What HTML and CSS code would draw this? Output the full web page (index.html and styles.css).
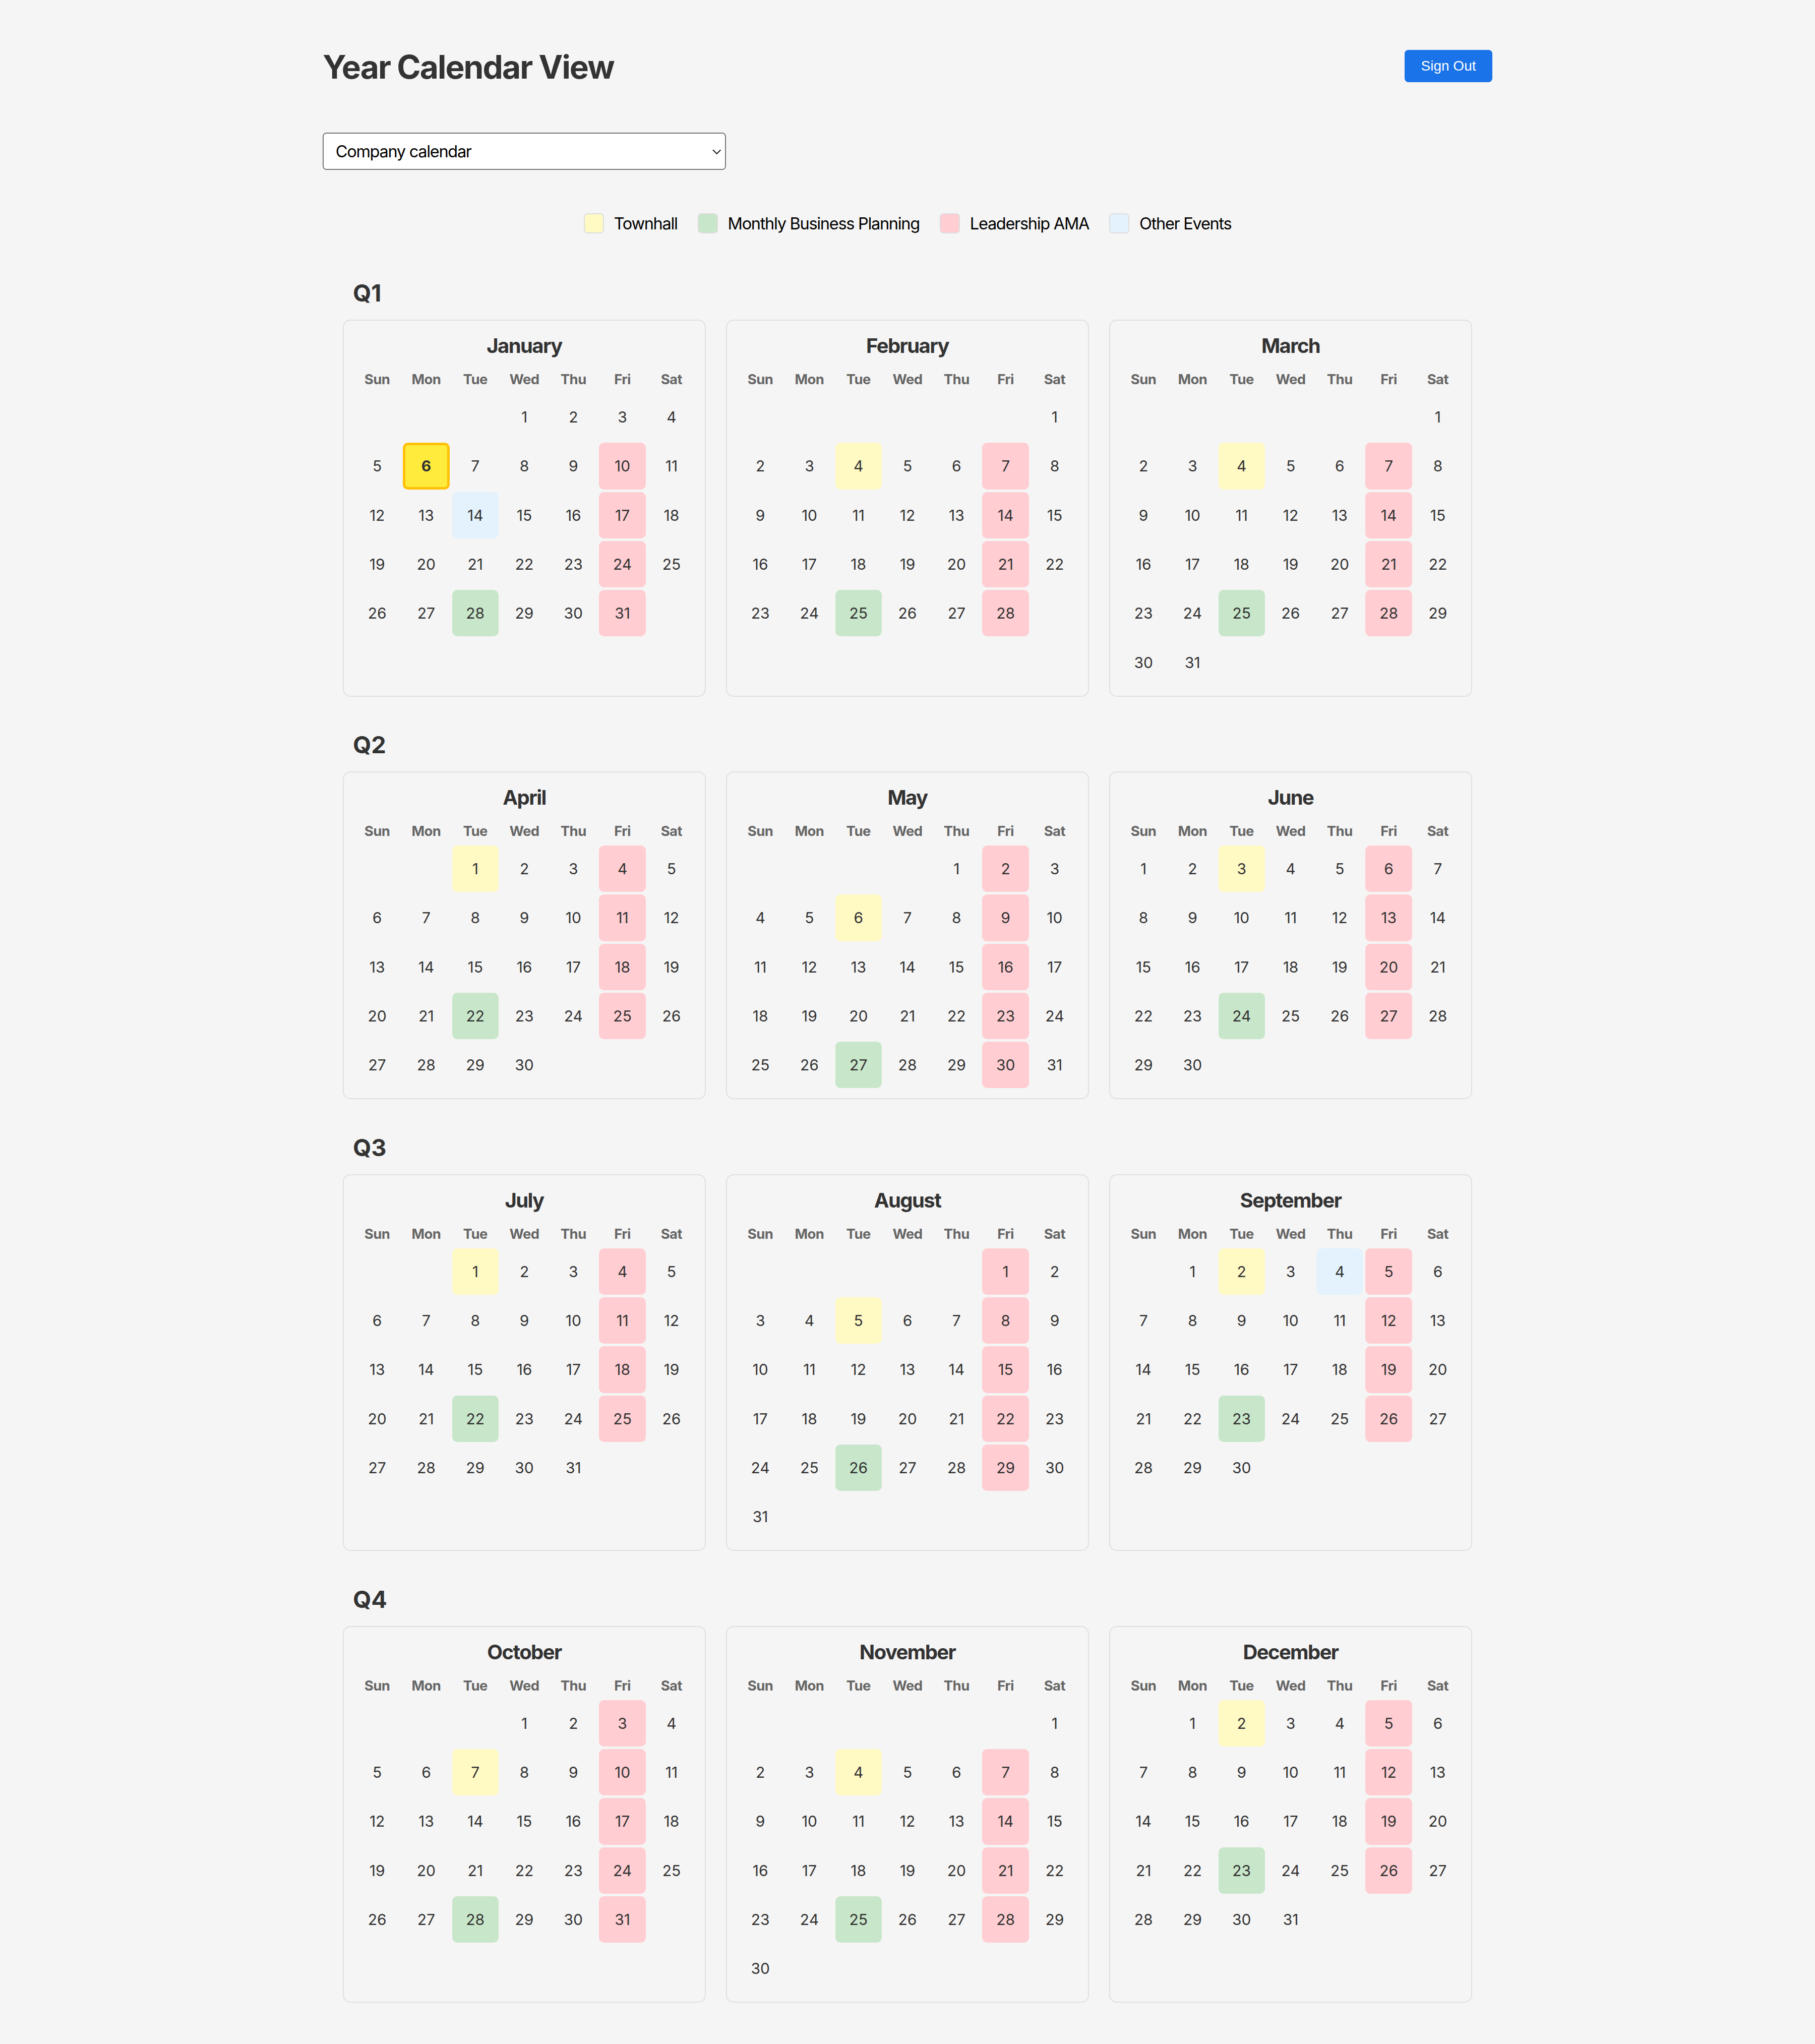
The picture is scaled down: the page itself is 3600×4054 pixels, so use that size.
FILE: index.html
```html
<!DOCTYPE html>
<html lang="en">
<head>
<meta charset="utf-8">
<title>Year Calendar View</title>
<link rel="stylesheet" href="styles.css">
</head>
<body>
<div class="page">
  <header class="header">
    <h1>Year Calendar View</h1>
    <button class="signout" type="button">Sign Out</button>
  </header>

  <div class="picker">
    <select>
      <option>Company calendar</option>
    </select>
    <svg class="chevron" viewBox="0 0 8 5" width="7" height="5" aria-hidden="true"><path d="M0.5 0.7 L4 4.2 L7.5 0.7" fill="none" stroke="#111" stroke-width="0.9"/></svg>
  </div>

  <div class="legend">
    <div class="legend-item"><span class="swatch t"></span>Townhall</div>
    <div class="legend-item"><span class="swatch m"></span>Monthly Business Planning</div>
    <div class="legend-item"><span class="swatch l"></span>Leadership AMA</div>
    <div class="legend-item"><span class="swatch o"></span>Other Events</div>
  </div>

  <section class="quarter">
    <h3>Q1</h3>
    <div class="months">
      <div class="month">
        <h4>January</h4>
        <div class="weekdays"><span>Sun</span><span>Mon</span><span>Tue</span><span>Wed</span><span>Thu</span><span>Fri</span><span>Sat</span></div>
        <div class="days">
          <span class="c4">1</span><span>2</span><span>3</span><span>4</span>
          <span>5</span><span class="today">6</span><span>7</span><span>8</span><span>9</span><span class="l">10</span><span>11</span>
          <span>12</span><span>13</span><span class="o">14</span><span>15</span><span>16</span><span class="l">17</span><span>18</span>
          <span>19</span><span>20</span><span>21</span><span>22</span><span>23</span><span class="l">24</span><span>25</span>
          <span>26</span><span>27</span><span class="m">28</span><span>29</span><span>30</span><span class="l">31</span>
        </div>
      </div>
      <div class="month">
        <h4>February</h4>
        <div class="weekdays"><span>Sun</span><span>Mon</span><span>Tue</span><span>Wed</span><span>Thu</span><span>Fri</span><span>Sat</span></div>
        <div class="days">
          <span class="c7">1</span>
          <span>2</span><span>3</span><span class="t">4</span><span>5</span><span>6</span><span class="l">7</span><span>8</span>
          <span>9</span><span>10</span><span>11</span><span>12</span><span>13</span><span class="l">14</span><span>15</span>
          <span>16</span><span>17</span><span>18</span><span>19</span><span>20</span><span class="l">21</span><span>22</span>
          <span>23</span><span>24</span><span class="m">25</span><span>26</span><span>27</span><span class="l">28</span>
        </div>
      </div>
      <div class="month">
        <h4>March</h4>
        <div class="weekdays"><span>Sun</span><span>Mon</span><span>Tue</span><span>Wed</span><span>Thu</span><span>Fri</span><span>Sat</span></div>
        <div class="days">
          <span class="c7">1</span>
          <span>2</span><span>3</span><span class="t">4</span><span>5</span><span>6</span><span class="l">7</span><span>8</span>
          <span>9</span><span>10</span><span>11</span><span>12</span><span>13</span><span class="l">14</span><span>15</span>
          <span>16</span><span>17</span><span>18</span><span>19</span><span>20</span><span class="l">21</span><span>22</span>
          <span>23</span><span>24</span><span class="m">25</span><span>26</span><span>27</span><span class="l">28</span><span>29</span>
          <span>30</span><span>31</span>
        </div>
      </div>
    </div>
  </section>

  <section class="quarter">
    <h3>Q2</h3>
    <div class="months">
      <div class="month">
        <h4>April</h4>
        <div class="weekdays"><span>Sun</span><span>Mon</span><span>Tue</span><span>Wed</span><span>Thu</span><span>Fri</span><span>Sat</span></div>
        <div class="days">
          <span class="c3 t">1</span><span>2</span><span>3</span><span class="l">4</span><span>5</span>
          <span>6</span><span>7</span><span>8</span><span>9</span><span>10</span><span class="l">11</span><span>12</span>
          <span>13</span><span>14</span><span>15</span><span>16</span><span>17</span><span class="l">18</span><span>19</span>
          <span>20</span><span>21</span><span class="m">22</span><span>23</span><span>24</span><span class="l">25</span><span>26</span>
          <span>27</span><span>28</span><span>29</span><span>30</span>
        </div>
      </div>
      <div class="month">
        <h4>May</h4>
        <div class="weekdays"><span>Sun</span><span>Mon</span><span>Tue</span><span>Wed</span><span>Thu</span><span>Fri</span><span>Sat</span></div>
        <div class="days">
          <span class="c5">1</span><span class="l">2</span><span>3</span>
          <span>4</span><span>5</span><span class="t">6</span><span>7</span><span>8</span><span class="l">9</span><span>10</span>
          <span>11</span><span>12</span><span>13</span><span>14</span><span>15</span><span class="l">16</span><span>17</span>
          <span>18</span><span>19</span><span>20</span><span>21</span><span>22</span><span class="l">23</span><span>24</span>
          <span>25</span><span>26</span><span class="m">27</span><span>28</span><span>29</span><span class="l">30</span><span>31</span>
        </div>
      </div>
      <div class="month">
        <h4>June</h4>
        <div class="weekdays"><span>Sun</span><span>Mon</span><span>Tue</span><span>Wed</span><span>Thu</span><span>Fri</span><span>Sat</span></div>
        <div class="days">
          <span>1</span><span>2</span><span class="t">3</span><span>4</span><span>5</span><span class="l">6</span><span>7</span>
          <span>8</span><span>9</span><span>10</span><span>11</span><span>12</span><span class="l">13</span><span>14</span>
          <span>15</span><span>16</span><span>17</span><span>18</span><span>19</span><span class="l">20</span><span>21</span>
          <span>22</span><span>23</span><span class="m">24</span><span>25</span><span>26</span><span class="l">27</span><span>28</span>
          <span>29</span><span>30</span>
        </div>
      </div>
    </div>
  </section>

  <section class="quarter">
    <h3>Q3</h3>
    <div class="months">
      <div class="month">
        <h4>July</h4>
        <div class="weekdays"><span>Sun</span><span>Mon</span><span>Tue</span><span>Wed</span><span>Thu</span><span>Fri</span><span>Sat</span></div>
        <div class="days">
          <span class="c3 t">1</span><span>2</span><span>3</span><span class="l">4</span><span>5</span>
          <span>6</span><span>7</span><span>8</span><span>9</span><span>10</span><span class="l">11</span><span>12</span>
          <span>13</span><span>14</span><span>15</span><span>16</span><span>17</span><span class="l">18</span><span>19</span>
          <span>20</span><span>21</span><span class="m">22</span><span>23</span><span>24</span><span class="l">25</span><span>26</span>
          <span>27</span><span>28</span><span>29</span><span>30</span><span>31</span>
        </div>
      </div>
      <div class="month">
        <h4>August</h4>
        <div class="weekdays"><span>Sun</span><span>Mon</span><span>Tue</span><span>Wed</span><span>Thu</span><span>Fri</span><span>Sat</span></div>
        <div class="days">
          <span class="c6 l">1</span><span>2</span>
          <span>3</span><span>4</span><span class="t">5</span><span>6</span><span>7</span><span class="l">8</span><span>9</span>
          <span>10</span><span>11</span><span>12</span><span>13</span><span>14</span><span class="l">15</span><span>16</span>
          <span>17</span><span>18</span><span>19</span><span>20</span><span>21</span><span class="l">22</span><span>23</span>
          <span>24</span><span>25</span><span class="m">26</span><span>27</span><span>28</span><span class="l">29</span><span>30</span>
          <span>31</span>
        </div>
      </div>
      <div class="month">
        <h4>September</h4>
        <div class="weekdays"><span>Sun</span><span>Mon</span><span>Tue</span><span>Wed</span><span>Thu</span><span>Fri</span><span>Sat</span></div>
        <div class="days">
          <span class="c2">1</span><span class="t">2</span><span>3</span><span class="o">4</span><span class="l">5</span><span>6</span>
          <span>7</span><span>8</span><span>9</span><span>10</span><span>11</span><span class="l">12</span><span>13</span>
          <span>14</span><span>15</span><span>16</span><span>17</span><span>18</span><span class="l">19</span><span>20</span>
          <span>21</span><span>22</span><span class="m">23</span><span>24</span><span>25</span><span class="l">26</span><span>27</span>
          <span>28</span><span>29</span><span>30</span>
        </div>
      </div>
    </div>
  </section>

  <section class="quarter">
    <h3>Q4</h3>
    <div class="months">
      <div class="month">
        <h4>October</h4>
        <div class="weekdays"><span>Sun</span><span>Mon</span><span>Tue</span><span>Wed</span><span>Thu</span><span>Fri</span><span>Sat</span></div>
        <div class="days">
          <span class="c4">1</span><span>2</span><span class="l">3</span><span>4</span>
          <span>5</span><span>6</span><span class="t">7</span><span>8</span><span>9</span><span class="l">10</span><span>11</span>
          <span>12</span><span>13</span><span>14</span><span>15</span><span>16</span><span class="l">17</span><span>18</span>
          <span>19</span><span>20</span><span>21</span><span>22</span><span>23</span><span class="l">24</span><span>25</span>
          <span>26</span><span>27</span><span class="m">28</span><span>29</span><span>30</span><span class="l">31</span>
        </div>
      </div>
      <div class="month">
        <h4>November</h4>
        <div class="weekdays"><span>Sun</span><span>Mon</span><span>Tue</span><span>Wed</span><span>Thu</span><span>Fri</span><span>Sat</span></div>
        <div class="days">
          <span class="c7">1</span>
          <span>2</span><span>3</span><span class="t">4</span><span>5</span><span>6</span><span class="l">7</span><span>8</span>
          <span>9</span><span>10</span><span>11</span><span>12</span><span>13</span><span class="l">14</span><span>15</span>
          <span>16</span><span>17</span><span>18</span><span>19</span><span>20</span><span class="l">21</span><span>22</span>
          <span>23</span><span>24</span><span class="m">25</span><span>26</span><span>27</span><span class="l">28</span><span>29</span>
          <span>30</span>
        </div>
      </div>
      <div class="month">
        <h4>December</h4>
        <div class="weekdays"><span>Sun</span><span>Mon</span><span>Tue</span><span>Wed</span><span>Thu</span><span>Fri</span><span>Sat</span></div>
        <div class="days">
          <span class="c2">1</span><span class="t">2</span><span>3</span><span>4</span><span class="l">5</span><span>6</span>
          <span>7</span><span>8</span><span>9</span><span>10</span><span>11</span><span class="l">12</span><span>13</span>
          <span>14</span><span>15</span><span>16</span><span>17</span><span>18</span><span class="l">19</span><span>20</span>
          <span>21</span><span>22</span><span class="m">23</span><span>24</span><span>25</span><span class="l">26</span><span>27</span>
          <span>28</span><span>29</span><span>30</span><span>31</span>
        </div>
      </div>
    </div>
  </section>
</div>
</body>
</html>
```

FILE: styles.css
```css
html {
  zoom: 2.5;
}

body {
  margin: 0;
  background: #f5f5f5;
  font-family: "Inter", "Noto Sans", sans-serif;
  color: #000;
}

.page {
  box-sizing: border-box;
  max-width: 960px;
  margin: 0 auto;
  padding: 16px 16px 34px;
}

/* Header */
.header {
  display: flex;
  justify-content: space-between;
  align-items: center;
  margin: 21.5px 0 37px;
}

.header h1 {
  margin: 0;
  font-size: 25.6px;
  font-weight: 700;
  letter-spacing: -0.03em;
  color: #333;
}

.signout {
  border: none;
  border-radius: 3px;
  background: #1a73e8;
  color: #fff;
  font-family: "Liberation Sans", Arial, sans-serif;
  font-size: 11.2px;
  line-height: 13.5px;
  padding: 6px 13px;
  margin-top: -1px;
  cursor: pointer;
}

/* Calendar picker */
.picker {
  position: relative;
  width: 320px;
  height: 29.5px;
}

.picker select {
  appearance: none;
  -webkit-appearance: none;
  box-sizing: border-box;
  width: 100%;
  height: 100%;
  border: 1px solid #767676;
  border-radius: 3px;
  background: #fff;
  color: #000;
  font-family: "Inter", sans-serif;
  font-size: 13px;
  letter-spacing: -0.04em;
  padding: 0 9.5px;
}

.chevron {
  position: absolute;
  right: 4px;
  top: 12.5px;
}

/* Legend */
.legend {
  display: flex;
  justify-content: center;
  gap: 16px;
  margin: 34.5px 0 36px;
  font-size: 13px;
  letter-spacing: -0.04em;
  color: #000;
}

.legend-item {
  display: flex;
  align-items: center;
  gap: 8px;
}

.swatch {
  box-sizing: border-box;
  width: 16px;
  height: 16px;
  border: 1px solid #ddd;
  border-radius: 3px;
}

/* Event colours */
.t { background: #fff9c4; }
.m { background: #c8e6c9; }
.l { background: #ffcdd2; }
.o { background: #e3f2fd; }

/* Quarters */
.quarter {
  margin-top: 27px;
  padding: 0 16px;
}

.quarter h3 {
  margin: 0 0 10px 8px;
  font-size: 18.72px;
  font-weight: 700;
  color: #333;
}

.months {
  display: grid;
  grid-template-columns: repeat(3, 1fr);
  gap: 16px;
}

.month {
  border: 1px solid #e0e0e0;
  border-radius: 6px;
  padding: 10px 8px 8px;
}

.month h4 {
  margin: 0 0 10px;
  font-size: 16px;
  font-weight: 700;
  letter-spacing: -0.04em;
  text-align: center;
  color: #333;
}

.weekdays,
.days {
  display: grid;
  grid-template-columns: repeat(7, 1fr);
  column-gap: 2px;
}

.weekdays {
  margin-bottom: 4.7px;
  font-size: 11px;
  font-weight: 700;
  letter-spacing: -0.02em;
  color: #666;
  text-align: center;
}

.days {
  row-gap: 2px;
}

.days span {
  box-sizing: border-box;
  aspect-ratio: 1;
  display: flex;
  align-items: center;
  justify-content: center;
  border-radius: 4px;
  font-size: 12px;
  color: #333;
}

.days .today {
  background: #ffeb3b;
  border: 2px solid #ffc107;
  font-weight: 700;
}

.c2 { grid-column-start: 2; }
.c3 { grid-column-start: 3; }
.c4 { grid-column-start: 4; }
.c5 { grid-column-start: 5; }
.c6 { grid-column-start: 6; }
.c7 { grid-column-start: 7; }
```
